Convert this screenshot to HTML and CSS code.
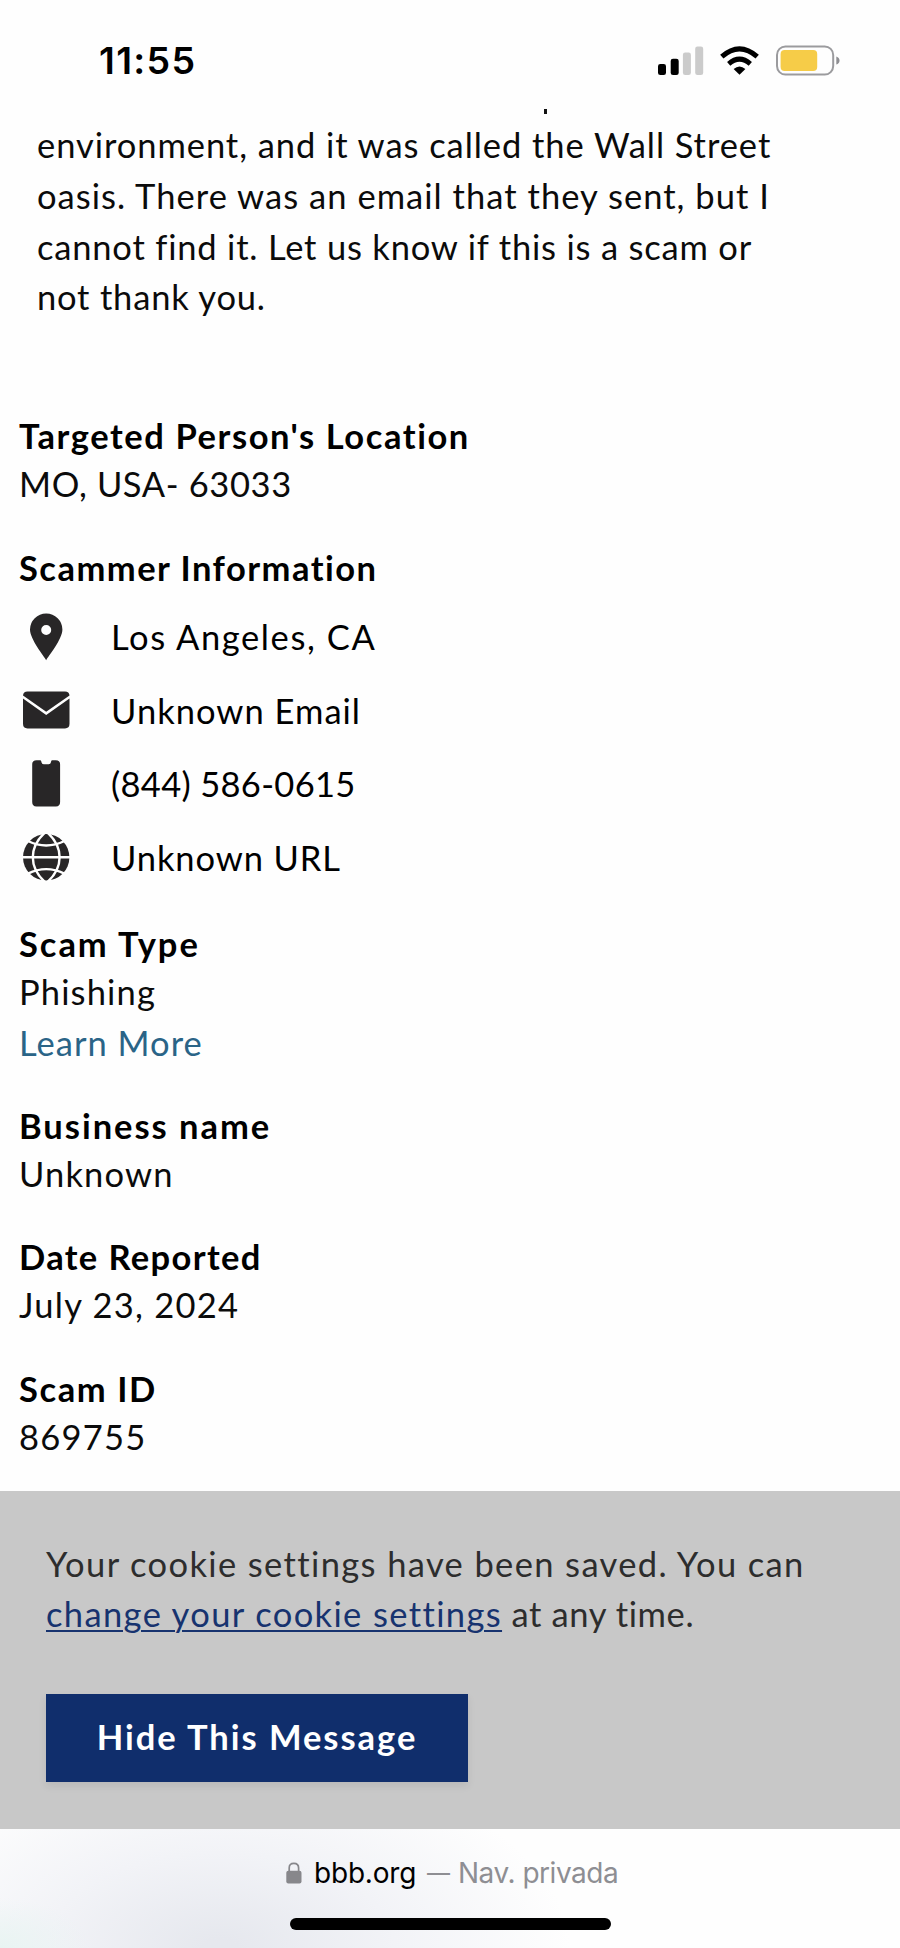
FILE: index.html
```html
<!DOCTYPE html>
<html lang="en">
<head>
<meta charset="utf-8">
<title>Scam report</title>
<link rel="stylesheet" href="styles.css">
</head>
<body>
<div class="screen">
  <header class="status">
    <span class="clock">11:55</span>
    <svg class="status-icons" width="184" height="32" viewBox="0 0 184 32">
      <rect x="0" y="19" width="8" height="11" rx="2.3"/>
      <rect x="12.7" y="13.7" width="8" height="16.3" rx="2.3"/>
      <g fill="#cbcbcb">
        <rect x="24.9" y="7.5" width="8" height="22.5" rx="2.3"/>
        <rect x="37.2" y="1.5" width="8" height="28.5" rx="2.3"/>
      </g>
      <path d="M81.5 29.8 75.6 24Q81.5 19 87.4 24Z"/>
      <g fill="none" stroke="#000" stroke-width="5">
        <path d="M70.7 18.8Q81.5 9.6 92.3 18.8"/>
        <path d="M63.8 11.7Q81.5-3.9 99.2 11.7"/>
      </g>
      <rect x="119" y="1.4" width="56.2" height="28.2" rx="8.5" fill="none" stroke="#9b9b9e" stroke-width="2"/>
      <rect x="122.6" y="5" width="36.6" height="21" rx="4" fill="#f6cc48"/>
      <path d="M178.3 11.5Q181.5 12.5 181.5 15.5T178.3 19.5Z" fill="#8e8e92"/>
    </svg>
  </header>

  <main class="report">
    <div class="cutoff"></div>
    <p class="story">
      <span class="line s114">environment, and it was called the Wall Street</span>
      <span class="line s121">oasis. There was an email that they sent, but I</span>
      <span class="line s100">cannot find it. Let us know if this is a scam or</span>
      <span class="line s100">not thank you.</span>
    </p>

    <section class="field location">
      <h2 class="s177">Targeted Person's Location</h2>
      <p class="s90">MO, USA- 63033</p>
    </section>

    <section class="field">
      <h2 class="s171">Scammer Information</h2>
      <ul class="contacts">
        <li>
          <svg class="icon" viewBox="0 0 48 48"><path fill-rule="evenodd" d="M24.2 47.3C22 43.2 8 26.3 8 16.6a16.2 16 0 0 1 32.4 0C40.4 26.3 26.4 43.2 24.2 47.3ZM24.2 12a5 5 0 1 0 0 10 5 5 0 0 0 0-10Z"/></svg>
          <span class="s180">Los Angeles, CA</span>
        </li>
        <li>
          <svg class="icon" viewBox="0 0 48 48"><path d="M1 8.500Q1.300 4.500 5.500 4.500H43Q47.200 4.500 47.500 8.500L24.200 24.800ZM1 11.600 24.200 28 47.500 11.600V36.800Q47.500 41.400 43 41.400H5.500Q1 41.400 1 36.800Z"/></svg>
          <span class="s130">Unknown Email</span>
        </li>
        <li>
          <svg class="icon" viewBox="0 0 48 48"><path d="M14.500 .3h3.600q1 0 1.200 1.300.4 2.700 2.400 2.700h5q2 0 2.400-2.700Q29.300 .3 30.300 .3h3.600q4.200 0 4.200 4.200v37.600q0 4.400-4.200 4.400H14.500q-4.300 0-4.300-4.400V4.500Q10.200 .3 14.500 .3Z"/></svg>
          <span class="s59">(844) 586-0615</span>
        </li>
        <li>
          <svg class="icon" viewBox="0 0 48 48"><circle cx="24.200" cy="23.300" r="23.200"/><path fill="none" stroke="#fff" stroke-width="2.400" d="M0 23.300H48.500M23 -1.500Q10.800 9.500 10.800 23.300T23 48.100M25.400 -1.500Q37.600 9.500 37.600 23.300T25.400 48.100M6 7Q24.200 16 42.400 7M6 39.600Q24.200 30.600 42.400 39.600"/></svg>
          <span class="s123">Unknown URL</span>
        </li>
      </ul>
    </section>

    <section class="field scam-type">
      <h2 class="s216">Scam Type</h2>
      <p class="s143">Phishing</p>
      <a class="learn s130">Learn More</a>
    </section>

    <section class="field business">
      <h2 class="s223">Business name</h2>
      <p class="s143">Unknown</p>
    </section>

    <section class="field">
      <h2 class="s163">Date Reported</h2>
      <p class="s151">July 23, 2024</p>
    </section>

    <section class="field">
      <h2 class="s191">Scam ID</h2>
      <p class="s151">869755</p>
    </section>
  </main>

  <aside class="cookies">
    <p class="notice">
      <span class="line s159">Your cookie settings have been saved. You can</span>
      <span class="line"><a class="change s159">change your cookie settings</a><span class="s90"> at any time.</span></span>
    </p>
    <button class="hide s223">Hide This Message</button>
  </aside>

  <footer class="browser">
    <div class="address">
      <svg class="lock" width="16" height="22" viewBox="0 0 16 22"><rect x=".3" y="8.800" width="15.200" height="12.700" rx="2" fill="#87878b"/><path d="M3.200 9.500V6Q3.200 1.300 7.900 1.300T12.600 6V9.500" fill="none" stroke="#87878b" stroke-width="1.700"/></svg>
      <span class="domain">bbb.org</span>
      <span class="dash">—</span>
      <span class="mode">Nav. privada</span>
    </div>
    <div class="home"></div>
  </footer>
</div>
</body>
</html>
```
FILE: styles.css
```css
* { box-sizing: border-box; }
body { margin: 0; background: #fefefe; }
h2, p, ul { margin: 0; padding: 0; }

.screen {
  width: 900px;
  height: 1948px;
  overflow: hidden;
  display: flex;
  flex-direction: column;
  background: #fefefe;
  color: #0b0b0b;
  font: 400 34.5px/48px Lato, "Open Sans", sans-serif;
}

.status {
  flex: none;
  height: 108.5px;
  padding: 37px 58px 0 99px;
  display: flex;
  justify-content: space-between;
  align-items: flex-start;
}
.clock {
  font: 600 37.5px/48px Inter, sans-serif;
  letter-spacing: 1.3px;
  color: #000;
}
.status-icons { margin-top: 7.5px; }

.report {
  flex: none;
  height: 1382.5px;
  padding: 0 19px;
}
.cutoff {
  width: 3px;
  height: 5px;
  margin-left: 524.5px;
  background: #111;
}
.line { display: block; white-space: nowrap; }
.story {
  padding: 6.5px 0 0 18px;
  line-height: 50.75px;
}

.field { margin-top: 35.3px; white-space: nowrap; }
.field.location { margin-top: 89.3px; }
.field.scam-type { margin-top: 24.4px; }
.field.business { margin-top: 33.6px; }
h2 {
  font-size: 34.5px;
  font-weight: 700;
  line-height: 48px;
  color: #000;
}

.contacts { list-style: none; margin-top: 8.1px; }
.contacts li {
  height: 73.9px;
  padding-left: 3px;
  display: flex;
  align-items: center;
  gap: 41px;
  color: #000;
}
.icon {
  flex: none;
  width: 48px;
  height: 48px;
  fill: #282627;
}

.learn {
  display: block;
  margin-top: 2px;
  line-height: 50.7px;
  color: #2a6487;
}

.cookies {
  flex: none;
  height: 338px;
  padding: 47.6px 46px 0;
  background: #c8c8c8;
  color: #2d2d2d;
}
.notice { line-height: 50.5px; }
.change {
  color: #17336f;
  text-decoration: underline;
  text-decoration-thickness: 2px;
  text-underline-offset: 3px;
}
.hide {
  display: block;
  width: 422px;
  height: 88px;
  margin-top: 54.6px;
  padding: 0 0 3px;
  border: 0;
  background: #102e6c;
  box-shadow: 0 4px 8px rgba(0, 0, 0, .08);
  color: #fff;
  font: 700 34.5px/48px Lato, "Open Sans", sans-serif;
}

.browser {
  flex: 1;
  padding-top: 27px;
  background:
    radial-gradient(ellipse 90px 50px at 0 100%, #e8f4f2, transparent),
    radial-gradient(ellipse 350px 190px at 220px 100%, #e6e8ee 5%, #f2f3f7 50%, transparent),
    #fefefe;
}
.address {
  height: 34px;
  padding-left: 286px;
  display: flex;
  align-items: center;
  white-space: pre;
  font: 400 28px/34px Inter, sans-serif;
  color: #8e8e93;
}
.lock { flex: none; margin: 0 12px 0 0; }
.domain { width: 113px; letter-spacing: -.19px; color: #000; }
.dash { width: 31px; font-size: 23px; }
.mode { letter-spacing: -.48px; }
.home {
  width: 321px;
  height: 12px;
  margin: 28px 0 0 290px;
  border-radius: 6px;
  background: #000;
}

.s59 { letter-spacing: .32px; }
.s90 { letter-spacing: .62px; }
.s100 { letter-spacing: .81px; }
.s114 { letter-spacing: .94px; }
.s121 { letter-spacing: 1.04px; }
.s123 { letter-spacing: .9px; }
.s130 { letter-spacing: 1.02px; }
.s143 { letter-spacing: 1.15px; }
.s151 { letter-spacing: 1.25px; }
.s159 { letter-spacing: 1.37px; }
.s163 { letter-spacing: 1.36px; }
.s171 { letter-spacing: 1.47px; }
.s177 { letter-spacing: 1.57px; }
.s180 { letter-spacing: 1.6px; }
.s191 { letter-spacing: 1.6px; }
.s216 { letter-spacing: 1.95px; }
.s223 { letter-spacing: 1.96px; }
```
